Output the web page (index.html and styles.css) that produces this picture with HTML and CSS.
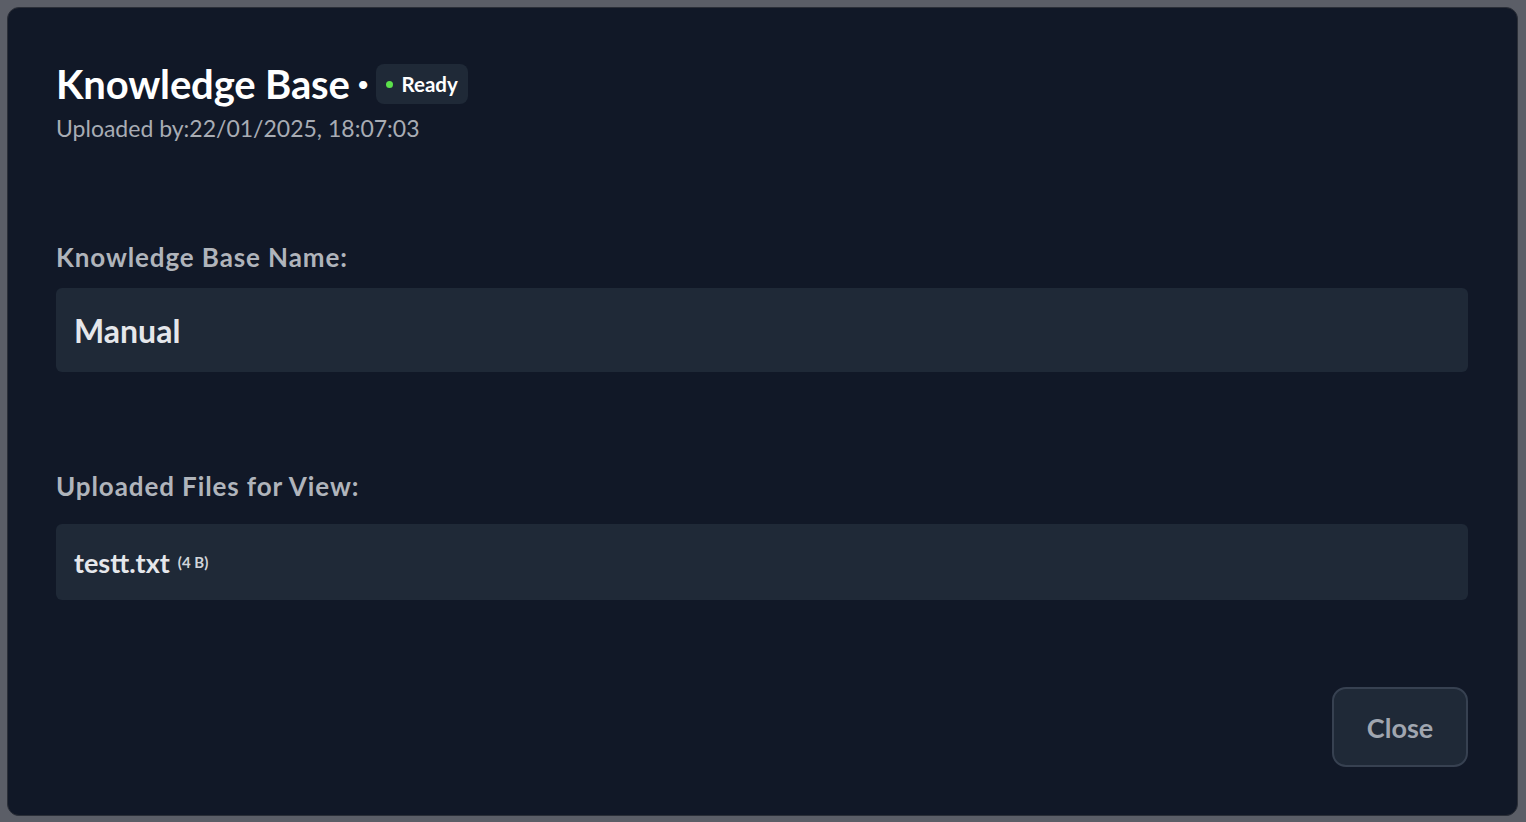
FILE: index.html
```html
<!DOCTYPE html>
<html lang="en">
<head>
<meta charset="utf-8">
<title>Knowledge Base</title>
<link rel="stylesheet" href="styles.css">
</head>
<body>
<div class="overlay">
  <div class="modal">
    <header class="head">
      <div class="title-row">
        <h1 class="title">Knowledge Base</h1>
        <span class="sep">•</span>
        <span class="badge"><span class="dot"></span>Ready</span>
      </div>
      <p class="sub">Uploaded by:22/01/2025, 18:07:03</p>
    </header>
    <section class="field name-field">
      <label class="label">Knowledge Base Name:</label>
      <div class="box name-box">Manual</div>
    </section>
    <section class="field files-field">
      <label class="label">Uploaded Files for View:</label>
      <div class="box files-box"><span class="fname">testt.txt</span><span class="fsize">(4 B)</span></div>
    </section>
    <footer class="foot">
      <button class="close">Close</button>
    </footer>
  </div>
</div>
</body>
</html>
```

FILE: styles.css
```css
* { box-sizing: border-box; }
html, body { margin: 0; padding: 0; }
body {
  background: #5b5e67;
  font-family: "Lato", "Liberation Sans", sans-serif;
  width: 1526px;
  height: 822px;
  overflow: hidden;
}
.overlay {
  padding: 7px 8px 6px 7px;
  height: 822px;
}
.modal {
  height: 809px;
  background: #111827;
  border: 1px solid #2b2f38;
  border-radius: 12px;
  padding: 56px 49px 48px 48px;
  display: flex;
  flex-direction: column;
}
.head { margin: 0; }
.title-row {
  display: flex;
  align-items: center;
  height: 40px;
}
.title {
  margin: 0;
  font-size: 40px;
  font-weight: 700;
  color: #ffffff;
  letter-spacing: -0.15px;
  line-height: 40px;
}
.sep {
  color: #ffffff;
  font-size: 22px;
  margin: 0 6px 0 7px;
  line-height: 40px;
}
.badge {
  display: inline-flex;
  align-items: center;
  height: 40px;
  padding: 0 10px 0 10px;
  background: #1f2937;
  border-radius: 8px;
  color: #ffffff;
  font-size: 20.5px;
  font-weight: 700;
}
.dot {
  width: 7px;
  height: 7px;
  border-radius: 50%;
  background: #5be14b;
  margin-right: 9px;
}
.sub {
  margin: 10px 0 0 0;
  font-size: 23px;
  color: #a8acb4;
  line-height: 28px;
}
.field { display: flex; flex-direction: column; }
.name-field { margin-top: 99px; }
.files-field { margin-top: 98px; }
.label {
  font-size: 26px;
  font-weight: 700;
  color: #b0b4bb;
  line-height: 32px;
  letter-spacing: 0.9px;
  margin-bottom: 15px;
}
.files-field .label { margin-bottom: 22px; }
.box {
  background: #1f2937;
  border-radius: 6px;
  display: flex;
  align-items: center;
  padding: 0 18px;
  color: #e5e7eb;
  font-weight: 700;
}
.name-box { height: 84px; font-size: 32px; }
.files-box { height: 76px; }
.fname { font-size: 27px; }
.fsize { font-size: 15px; margin-left: 8px; color: #d1d5db; }
.foot {
  margin-top: auto;
  display: flex;
  justify-content: flex-end;
}
.close {
  width: 136px;
  height: 80px;
  background: #1f2937;
  border: 2px solid #374151;
  border-radius: 14px;
  color: #a0a6b0;
  font-family: inherit;
  font-size: 27px;
  font-weight: 700;
  cursor: pointer;
}
```
